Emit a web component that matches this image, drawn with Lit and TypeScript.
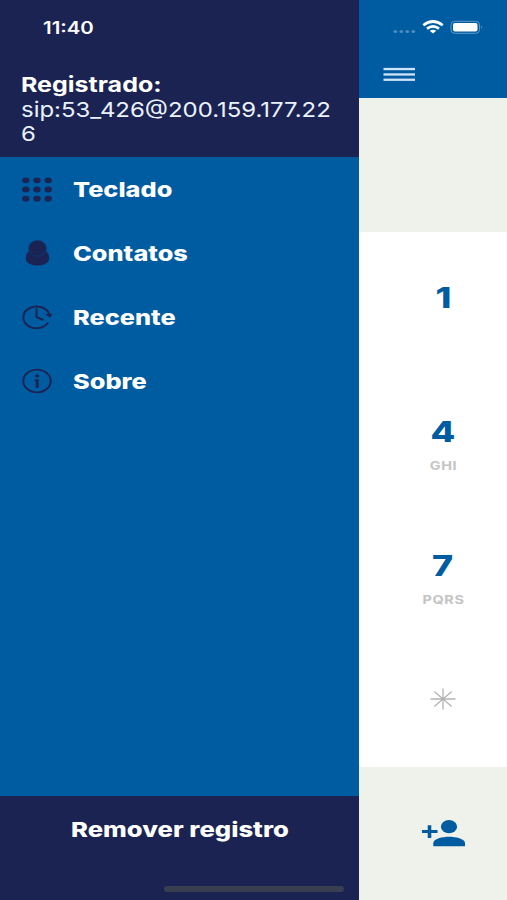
import { LitElement, html, css, svg } from "lit";
import { customElement } from "lit/decorators.js";

const dots = [0, 1, 2].flatMap((r) =>
  [0, 1, 2].map((c) => svg`<ellipse cx=${3.8 + c * 11.3} cy=${3.3 + r * 9.3} rx="3.7" ry="2.9"/>`)
);

const icons = {
  keypad: html`<svg width="30" height="25" viewBox="0 0 30.2 25.2">${dots}</svg>`,
  person: html`<svg width="30" height="26" viewBox="0 0 30 26">
    <path d="M7.500 10.500 C4.500 13 3.600 16 4 19.500 C5 23.500 10 25.500 15.500 25.500 C21 25.500 26 23.500 27 19.500 C27.400 16 26.500 13 23.500 10.500 Z"/>
    <ellipse cx="15.500" cy="8.300" rx="9" ry="7.900" stroke="#0f3a7c" stroke-width="0.900"/>
  </svg>`,
  recent: html`<svg class="line" width="32" height="26" viewBox="0 0 32 26" stroke="currentColor" stroke-width="2">
    <path d="M26.200 18.500 A13.200 10.900 0 1 1 27.300 10.500"/>
    <path d="M14.500 4.300 V13 L21.300 16"/>
    <path d="M23.400 10 H30.800 L27.800 13.800 Z" fill="currentColor" stroke="none"/>
  </svg>`,
  info: html`<svg width="30" height="26" viewBox="0 0 30 26">
    <ellipse cx="15" cy="13" rx="13.700" ry="11.400" fill="none" stroke="currentColor" stroke-width="1.900"/>
    <ellipse cx="15.200" cy="7.900" rx="2.100" ry="1.700"/>
    <path d="M12.500 11.300 H16.700 V19.800 H13.700 V13 H12.500 Z"/>
  </svg>`,
};

const menu = [
  { icon: icons.keypad, label: "Teclado" },
  { icon: icons.person, label: "Contatos" },
  { icon: icons.recent, label: "Recente" },
  { icon: icons.info, label: "Sobre" },
];

const keys = [
  { digit: "1", letters: "" },
  { digit: "4", letters: "GHI" },
  { digit: "7", letters: "PQRS" },
];

@customElement("side-drawer")
export class SideDrawer extends LitElement {
  static styles = css`
    :host { display: flex; flex-direction: column; width: 359px; height: 900px; background: #005ca1; color: #fff; }
    .head { box-sizing: border-box; height: 157px; background: #1b2352; padding: 16px 21px 0; }
    .wide { display: inline-block; white-space: nowrap; transform: scaleX(1.22); transform-origin: 0 50%; }
    .time { display: block; height: 24px; line-height: 24px; margin-left: 22px; font-size: 17px; font-weight: 600; transform: scaleX(1.2); }
    .title { display: block; margin-top: 32px; height: 26px; line-height: 25px; font-size: 20.500px; font-weight: 700; }
    .sip { display: block; line-height: 24px; font-size: 20.500px; color: #eaf2ff; transform: scaleX(1.168); }
    .items { flex: 1; }
    .item { display: flex; align-items: center; height: 64px; padding-left: 22px; }
    .icon { display: flex; justify-content: flex-start; width: 51px; color: #1b2352; }
    .icon svg { display: block; fill: currentColor; overflow: visible; }
    .icon svg.line { fill: none; }
    .label { font-size: 20.500px; font-weight: 800; transform: scaleX(1.235); }
    .foot { position: relative; box-sizing: border-box; height: 104px; background: #1b2352; padding: 21px 0 0 71px; }
    .foot .label { line-height: 26px; transform: scaleX(1.25); }
    .bar { position: absolute; left: 164px; bottom: 8px; width: 180px; height: 6px; border-radius: 3px; background: #393f51; }
  `;
  render() {
    return html`
      <div class="head">
        <span class="wide time">11:40</span>
        <span class="wide title">Registrado:</span>
        <span class="wide sip">sip:53_426@200.159.177.22<br />6</span>
      </div>
      <div class="items">
        ${menu.map((m) => html`<div class="item"><span class="icon">${m.icon}</span><span class="wide label">${m.label}</span></div>`)}
      </div>
      <div class="foot"><span class="wide label">Remover registro</span><div class="bar"></div></div>
    `;
  }
}

@customElement("dial-pad")
export class DialPad extends LitElement {
  static styles = css`
    :host { display: flex; flex-direction: column; width: 168px; height: 900px; flex: none; background: #fff; }
    .top { box-sizing: border-box; height: 98px; background: #005ca1; padding: 20px 0 0 24px; }
    .status { display: flex; align-items: center; height: 14px; padding-left: 10px; }
    .status svg, .burger, .star, .add { display: block; }
    .burger { margin-top: 33px; }
    .display { height: 134px; background: #eff2ea; }
    .key { display: flex; flex-direction: column; align-items: center; box-sizing: border-box; height: 133.750px; padding-top: 48px; }
    .digit { font-size: 29px; line-height: 36px; font-weight: 800; color: #005ca1; transform: scaleX(1.24); }
    .letters { font-size: 12px; line-height: 16px; margin-top: 8px; padding-left: 1px; font-weight: 700; letter-spacing: 0.5px; color: #c4c4c4; transform: scaleX(1.2); }
    .star { margin-top: 7px; }
    .bottom { flex: 1; background: #eff2ea; display: flex; justify-content: center; }
    .add { margin-top: 53px; }
  `;
  render() {
    return html`
      <div class="top">
        <div class="status">
          <svg width="92" height="14" viewBox="393 20 92 14">
            <g fill="#4a8cc2">
              <ellipse cx="395.300" cy="31.600" rx="1.900" ry="1.500"/><ellipse cx="401.300" cy="31.600" rx="1.900" ry="1.500"/>
              <ellipse cx="407.300" cy="31.600" rx="1.900" ry="1.500"/><ellipse cx="413.300" cy="31.600" rx="1.900" ry="1.500"/>
            </g>
            <g fill="none" stroke="#fff" stroke-width="2.700">
              <path d="M423.300 25.200 Q433 17.800 442.700 25.200"/>
              <path d="M427 28.600 Q433 24 439 28.600"/>
            </g>
            <path d="M429.700 30.800 Q433 28.600 436.300 30.800 L433 33.400 Z" fill="#fff"/>
            <rect x="451" y="21.300" width="28.500" height="12" rx="3.700" fill="none" stroke="#5f9aca" stroke-width="1"/>
            <rect x="453" y="23" width="24.500" height="8.600" rx="2" fill="#fff"/>
            <path d="M481.300 25.500 Q483 27.300 481.300 29.100 Z" fill="#7fb0d8"/>
          </svg>
        </div>
        <svg class="burger" width="32" height="15" viewBox="0 0 32 15" fill="#cfe4f8">
          <rect x="0.500" y="0.900" width="31.500" height="2.300"/><rect x="0.500" y="6.300" width="31.500" height="2.300"/><rect x="0.500" y="11.600" width="31.500" height="2.300"/>
        </svg>
      </div>
      <div class="display"></div>
      ${keys.map((k) => html`<div class="key"><span class="digit">${k.digit}</span><span class="letters">${k.letters}</span></div>`)}
      <div class="key">
        <svg class="star" width="26" height="22" viewBox="0 0 26 22" stroke="#b3b3b3" stroke-width="1.300">
          <path d="M13 0.500 V21.500 M0.500 11 H25.500 M4.300 3.500 L21.700 18.500 M21.700 3.500 L4.300 18.500"/>
        </svg>
      </div>
      <div class="bottom">
        <svg class="add" width="43" height="27" viewBox="0 0 43 27" fill="#005ca1">
          <path d="M5.700 5.200 H9.300 V10 H15.500 V13 H9.300 V18 H5.700 V13 H0 V10 H5.700 Z"/>
          <ellipse cx="27" cy="6.700" rx="8.100" ry="6.600"/>
          <path d="M11.300 26.300 V23 C11.300 18.700 20.500 16.700 27 16.700 C33.500 16.700 43 18.700 43 23 V26.300 Z"/>
        </svg>
      </div>
    `;
  }
}

@customElement("app-root")
export class AppRoot extends LitElement {
  static styles = css`
    :host { display: flex; width: 507px; height: 900px; overflow: hidden; font-family: Inter, "Liberation Sans", sans-serif; }
    side-drawer { flex: none; }
  `;
  render() {
    return html`<side-drawer></side-drawer><dial-pad></dial-pad>`;
  }
}
